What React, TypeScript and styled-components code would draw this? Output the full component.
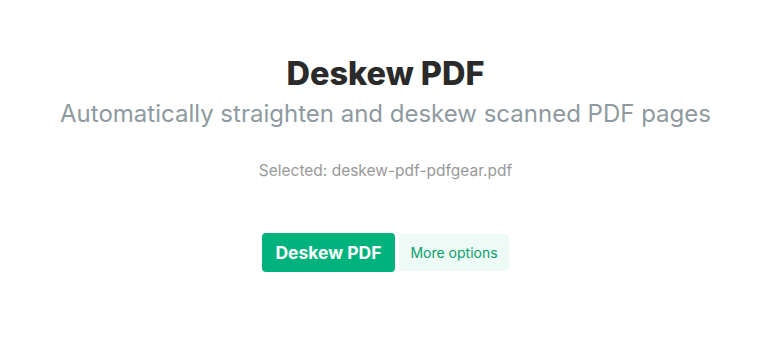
import React from "react";
import styled, { createGlobalStyle } from "styled-components";

const Global = createGlobalStyle`
  html, body { margin: 0; padding: 0; background: #ffffff; }
  body { font-family: Inter, "Noto Sans", sans-serif; -webkit-font-smoothing: antialiased; }
`;

const Page = styled.main`
  width: 760px;
  height: 360px;
  box-sizing: border-box;
  padding: 54px 0 0 11px;
  display: flex;
  flex-direction: column;
  align-items: center;
`;

const Title = styled.h1`
  margin: 0;
  font-size: 32.5px;
  line-height: 40px;
  font-weight: 800;
  color: #2a2a2a;
`;

const Subtitle = styled.p`
  margin: 5px 0 0;
  font-size: 24px;
  line-height: 30px;
  font-weight: 400;
  color: #8e9a9f;
  white-space: nowrap;
`;

const Selected = styled.p`
  margin: 31px 0 0;
  font-size: 15.5px;
  line-height: 22px;
  color: #999999;
`;

const Actions = styled.div`
  margin-top: 51px;
  display: flex;
  align-items: center;
  gap: 4px;
`;

const Button = styled.button<{ $variant: "primary" | "secondary" }>`
  font-family: Inter, "Noto Sans", sans-serif;
  border: none;
  border-radius: 4px;
  cursor: pointer;
  display: flex;
  align-items: center;
  justify-content: center;
  padding: 0;
  ${(p) =>
    p.$variant === "primary"
      ? `
    width: 133px;
    height: 39px;
    background: #00b27b;
    color: #ffffff;
    font-size: 17.5px;
    font-weight: 700;
  `
      : `
    width: 110px;
    height: 37px;
    background: #eefaf5;
    color: #0b9f6d;
    font-size: 14px;
    font-weight: 400;
  `}
`;

export default function App() {
  return (
    <>
      <Global />
      <Page>
        <Title>Deskew PDF</Title>
        <Subtitle>Automatically straighten and deskew scanned PDF pages</Subtitle>
        <Selected>Selected: deskew-pdf-pdfgear.pdf</Selected>
        <Actions>
          <Button $variant="primary">Deskew PDF</Button>
          <Button $variant="secondary">More options</Button>
        </Actions>
      </Page>
    </>
  );
}
